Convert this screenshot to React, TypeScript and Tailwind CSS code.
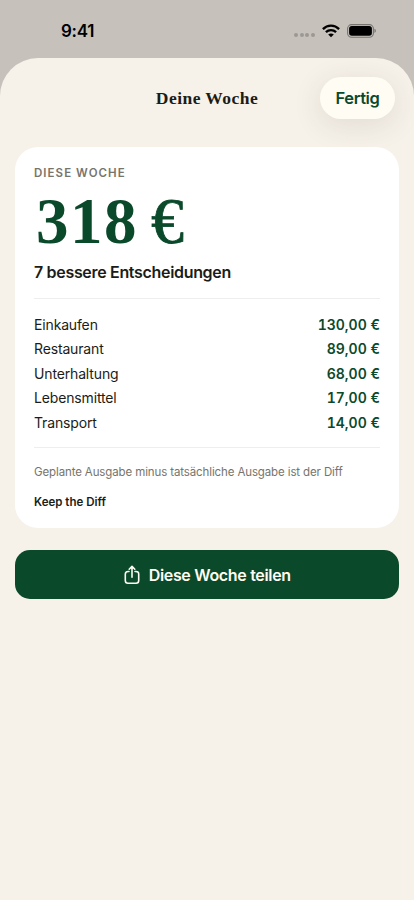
/**
 * Wochenübersicht als Sheet
 * Zeigt die gesparte Summe, die Kategorien und den Teilen-Button
 */

interface Category {
  name: string;
  amount: string;
}

const categories: Category[] = [
  { name: 'Einkaufen', amount: '130,00 €' },
  { name: 'Restaurant', amount: '89,00 €' },
  { name: 'Unterhaltung', amount: '68,00 €' },
  { name: 'Lebensmittel', amount: '17,00 €' },
  { name: 'Transport', amount: '14,00 €' },
];

function WifiIcon() {
  return (
    <svg className="h-[14px] w-[18px]" viewBox="0 0 18 14" fill="none" stroke="#000" strokeWidth="2.3">
      <path d="M0.9 5.1C5.4 0.5 12.6 0.5 17.1 5.1" />
      <path d="M3.9 8.2C6.8 5.4 11.2 5.4 14.1 8.2" />
      <path d="M6.2 10.5C7.8 9.1 10.2 9.1 11.8 10.5L9 13.3Z" fill="#000" stroke="none" />
    </svg>
  );
}

function BatteryIcon() {
  return (
    <svg className="h-[14px] w-[29px]" viewBox="0 0 29 14">
      <rect x="0.6" y="0.6" width="25.8" height="12.6" rx="4" fill="none" stroke="#000" strokeOpacity="0.4" strokeWidth="1.1" />
      <rect x="2.1" y="2.1" width="22.8" height="9.6" rx="2.7" fill="#000" />
      <path d="M27.5 4.7C29.2 5.4 29.2 8.3 27.5 9Z" fill="#000" fillOpacity="0.45" />
    </svg>
  );
}

function ShareIcon() {
  return (
    <svg
      className="h-5 w-4"
      viewBox="0 0 16 20"
      fill="none"
      stroke="#fffdf3"
      strokeWidth="1.6"
      strokeLinecap="round"
      strokeLinejoin="round"
    >
      <path d="M5 6.5H4C2.2 6.5 1.3 7.4 1.3 9.2V15.5C1.3 17.3 2.2 18.2 4 18.2H12C13.8 18.2 14.7 17.3 14.7 15.5V9.2C14.7 7.4 13.8 6.5 12 6.5H11" />
      <path d="M8 12.2V1.6M5.2 4.2L8 1.4L10.8 4.2" />
    </svg>
  );
}

function StatusBar() {
  return (
    <div className="flex h-[58px] items-start justify-between pl-[61px] pr-[38px] pt-[21px]">
      <span className="text-[17px] leading-5 font-semibold tracking-[-0.25px] text-black">9:41</span>
      <div className="flex items-center pt-[3px]">
        <div className="mr-[7px] flex gap-[1.6px] pt-[8px]">
          {[0, 1, 2, 3].map((dot) => (
            <span key={dot} className="size-[4px] rounded-full bg-[#9c9894]" />
          ))}
        </div>
        <WifiIcon />
        <div className="ml-[7px]">
          <BatteryIcon />
        </div>
      </div>
    </div>
  );
}

function SummaryCard() {
  return (
    <section className="mx-[15px] mt-[28px] h-[381px] rounded-[23px] bg-white px-[19px] pt-[18px]">
      <p className="text-[11.5px] leading-4 font-semibold tracking-[1.05px] text-[#77746b]">DIESE WOCHE</p>
      <p className="mt-[6px] h-[68px] pl-[2px] font-['Liberation_Serif',serif] text-[65px] leading-[68px] font-bold tracking-[1.5px] whitespace-nowrap text-[#0b492b]">
        318
        <span className="ml-[13px] text-[66px] leading-none font-normal [-webkit-text-stroke:0.8px_#0b492b]">€</span>
      </p>
      <p className="mt-[7px] text-[16px] leading-5 font-semibold tracking-[-0.32px] text-[#1b1c17]">
        7 bessere Entscheidungen
      </p>
      <hr className="mt-[16px] border-[#eeeeec]" />
      <ul className="mt-[13px]">
        {categories.map(({ name, amount }) => (
          <li key={name} className="flex h-[24.5px] items-center justify-between text-[14px]">
            <span className="tracking-[-0.15px] text-[#1b1c17]">{name}</span>
            <span className="font-semibold text-[#0b492b] tabular-nums">{amount}</span>
          </li>
        ))}
      </ul>
      <hr className="mt-[12.5px] border-[#eeeeec]" />
      <p className="mt-[15.5px] text-[11.5px] leading-4 tracking-[-0.12px] whitespace-nowrap text-[#77746b]">
        Geplante Ausgabe minus tatsächliche Ausgabe ist der Diff
      </p>
      <p className="mt-[14.5px] text-[11.5px] leading-4 font-semibold text-[#1b1c17]">Keep the Diff</p>
    </section>
  );
}

export default function App() {
  return (
    <div className="h-[900px] w-full overflow-hidden bg-[#c6c1bb] font-['Inter',sans-serif]">
      <StatusBar />
      <main className="h-[842px] rounded-t-[38px] bg-[#f6f1e9] pt-[19px]">
        <header className="grid h-[42px] grid-cols-[1fr_auto_1fr] items-center px-[19px]">
          <h1 className="col-start-2 pt-px font-['Liberation_Serif',serif] text-[17.5px] font-bold tracking-[0.45px] text-[#1b1c17]">
            Deine Woche
          </h1>
          <button className="h-[42px] w-[75px] justify-self-end rounded-full bg-[#fffdf3] text-[16.5px] font-semibold tracking-[-0.4px] text-[#0b492b] shadow-[0_6px_30px_rgba(80,70,50,0.12)]">
            Fertig
          </button>
        </header>
        <SummaryCard />
        <button className="mx-[15px] mt-[22px] flex h-[49px] w-[384px] items-center justify-center gap-[8.5px] rounded-[15px] bg-[#0b492b] pl-px text-[16px] font-semibold tracking-[-0.32px] text-[#fffdf3]">
          <ShareIcon />
          Diese Woche teilen
        </button>
      </main>
    </div>
  );
}
